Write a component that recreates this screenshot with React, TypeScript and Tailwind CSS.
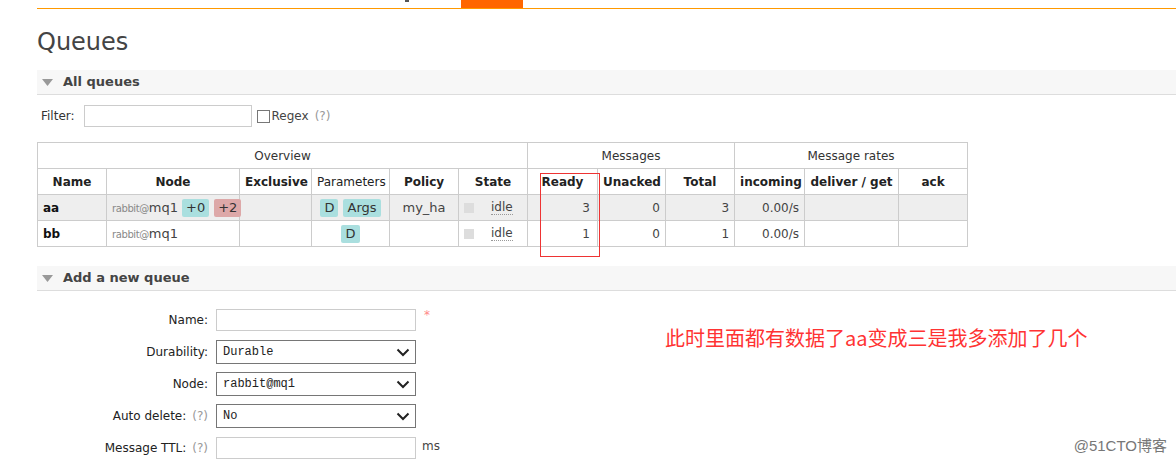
import React from "react";

const cell = "border border-[#ccc] px-[5px] h-[26px]";

function SectionHeader({ title }: { title: string }) {
  return (
    <div className="flex h-[25px] items-center gap-[10px] border-b border-[#ddd] bg-[#f7f7f7] pl-[5px]">
      <svg width="11" height="7" viewBox="0 0 11 7">
        <polygon points="0,0 11,0 5.5,7" fill="#999" />
      </svg>
      <span className="text-[13px] font-bold text-[#444]">{title}</span>
    </div>
  );
}

function Badge({ children, red }: { children: React.ReactNode; red?: boolean }) {
  return (
    <span
      className={`inline-block rounded-[2px] px-[4px] leading-[18px] text-[13px] text-[#333] ${
        red ? "bg-[#dda8a8]" : "bg-[#aadfdf]"
      }`}
    >
      {children}
    </span>
  );
}

function State() {
  return (
    <div className="flex items-center">
      <span className="inline-block h-[10px] w-[10px] bg-[#ddd]" />
      <span className="ml-[17px] border-b border-dotted border-[#999] leading-[14px]">idle</span>
    </div>
  );
}

const rows = [
  { name: "aa", extra: true, args: true, policy: "my_ha", ready: 3, unacked: 0, total: 3, bg: "bg-[#eee]" },
  { name: "bb", extra: false, args: false, policy: "", ready: 1, unacked: 0, total: 1, bg: "bg-white" },
];

function Select({ value }: { value: string }) {
  return (
    <div className="flex h-[24px] w-[200px] items-center justify-between border border-[#767676] bg-white pl-[6px] pr-[5px]">
      <span className="font-['Liberation_Mono',monospace] text-[12px] text-[#222]">{value}</span>
      <svg width="14" height="9" viewBox="0 0 14 9">
        <path d="M1.5 1.5 L7 7 L12.5 1.5" stroke="#222" strokeWidth="2" fill="none" />
      </svg>
    </div>
  );
}

function Help() {
  return <span className="ml-[6px] text-[#999]">(?)</span>;
}

export default function App() {
  return (
    <div className="relative h-[466px] w-[1176px] overflow-hidden bg-white font-['DejaVu_Sans',sans-serif] text-[12px] text-[#444]">
      <div className="ml-[37px] flex h-[9px] border-b border-[#f90]">
        <div className="ml-[368px] h-[2px] w-[4px] bg-[#555]" />
        <div className="ml-[52px] h-[8px] w-[62px] bg-[#f60]" />
      </div>

      <div className="ml-[37px]">
        <h1 className="mt-[19px] text-[24px] leading-[28px] text-[#444]">Queues</h1>

        <div className="mt-[14px]">
          <SectionHeader title="All queues" />
        </div>

        <div className="mt-[10px] flex h-[22px] items-center pl-[4px]">
          <span className="text-[#333]">Filter:</span>
          <div className="ml-[9px] h-[22px] w-[168px] border border-[#ccc]" />
          <span className="ml-[5px] inline-block h-[13px] w-[13px] border border-[#777] bg-white" />
          <span className="ml-[2px] text-[#444]">Regex</span>
          <Help />
        </div>

        <div className="relative mt-[15px] w-[931px]">
          <table className="w-[931px] table-fixed border-collapse text-[12px]">
            <colgroup>
              <col className="w-[69px]" />
              <col className="w-[133px]" />
              <col className="w-[72px]" />
              <col className="w-[78px]" />
              <col className="w-[69px]" />
              <col className="w-[69px]" />
              <col className="w-[70px]" />
              <col className="w-[68px]" />
              <col className="w-[69px]" />
              <col className="w-[70px]" />
              <col className="w-[94px]" />
              <col className="w-[69px]" />
            </colgroup>
            <thead>
              <tr className="text-center text-[#333]">
                <th colSpan={6} className={`${cell} font-normal`}>Overview</th>
                <th colSpan={3} className={`${cell} font-normal`}>Messages</th>
                <th colSpan={3} className={`${cell} font-normal`}>Message rates</th>
              </tr>
              <tr className="text-center text-[#222]">
                <th className={cell}>Name</th>
                <th className={cell}>Node</th>
                <th className={`${cell} px-0`}>Exclusive</th>
                <th className={`${cell} px-0 font-normal`}>Parameters</th>
                <th className={cell}>Policy</th>
                <th className={cell}>State</th>
                <th className={`${cell} px-0`}>Ready</th>
                <th className={`${cell} px-0`}>Unacked</th>
                <th className={cell}>Total</th>
                <th className={`${cell} px-0`}>incoming</th>
                <th className={`${cell} px-0`}>deliver / get</th>
                <th className={cell}>ack</th>
              </tr>
            </thead>
            <tbody>
              {rows.map((r) => (
                <tr key={r.name} className={r.bg}>
                  <td className={`${cell} font-bold text-[#111]`}>{r.name}</td>
                  <td className={cell}>
                    <div className="flex items-baseline">
                      <span className="text-[10px] tracking-[-0.4px] text-[#888]">rabbit@</span>
                      <span className="text-[13px] text-[#444]">mq1</span>
                      {r.extra && (
                        <span className="ml-[4px] flex gap-[5px]">
                          <Badge>+0</Badge>
                          <Badge red>+2</Badge>
                        </span>
                      )}
                    </div>
                  </td>
                  <td className={cell} />
                  <td className={`${cell} text-center`}>
                    <span className="inline-flex gap-[5px]">
                      <Badge>D</Badge>
                      {r.args && <Badge>Args</Badge>}
                    </span>
                  </td>
                  <td className={`${cell} text-center text-[13px]`}>{r.policy}</td>
                  <td className={cell}>
                    <State />
                  </td>
                  <td className={`${cell} text-right pr-[7px]`}>{r.ready}</td>
                  <td className={`${cell} text-right`}>{r.unacked}</td>
                  <td className={`${cell} text-right`}>{r.total}</td>
                  <td className={`${cell} text-right`}>0.00/s</td>
                  <td className={cell} />
                  <td className={cell} />
                </tr>
              ))}
            </tbody>
          </table>
          <div className="absolute left-[503px] top-[31px] h-[84px] w-[60px] border border-[#e33]" />
        </div>

        <div className="mt-[19px]">
          <SectionHeader title="Add a new queue" />
        </div>

        <div className="mt-[13px] flex">
          <div className="flex w-[628px] flex-col">
            <div className="flex h-[32px] items-center">
              <span className="w-[171px] text-right text-[#222]">Name:</span>
              <div className="ml-[8px] h-[22px] w-[200px] border border-[#ccc]" />
              <span className="ml-[8px] -mt-[10px] text-[#f88]">*</span>
            </div>
            <div className="flex h-[32px] items-center">
              <span className="w-[171px] text-right text-[#222]">Durability:</span>
              <div className="ml-[8px]"><Select value="Durable" /></div>
            </div>
            <div className="flex h-[32px] items-center">
              <span className="w-[171px] text-right text-[#222]">Node:</span>
              <div className="ml-[8px]"><Select value="rabbit@mq1" /></div>
            </div>
            <div className="flex h-[32px] items-center">
              <span className="w-[171px] text-right text-[#222]">
                Auto delete:<Help />
              </span>
              <div className="ml-[8px]"><Select value="No" /></div>
            </div>
            <div className="flex h-[32px] items-center">
              <span className="w-[171px] text-right text-[#222]">
                Message TTL:<Help />
              </span>
              <div className="ml-[8px] h-[22px] w-[200px] border border-[#ccc]" />
              <span className="ml-[6px] -mt-[4px] text-[#444]">ms</span>
            </div>
          </div>
          <div className="pt-[22px] font-['Noto_Sans_CJK_SC',sans-serif] text-[20px] leading-[24px] text-[#f33]">
            此时里面都有数据了aa变成三是我多添加了几个
          </div>
        </div>
      </div>

      <div className="absolute bottom-[9px] right-[9px] font-['Liberation_Sans','Noto_Sans_CJK_SC',sans-serif] text-[15px] text-[#777]">
        @51CTO博客
      </div>
    </div>
  );
}
